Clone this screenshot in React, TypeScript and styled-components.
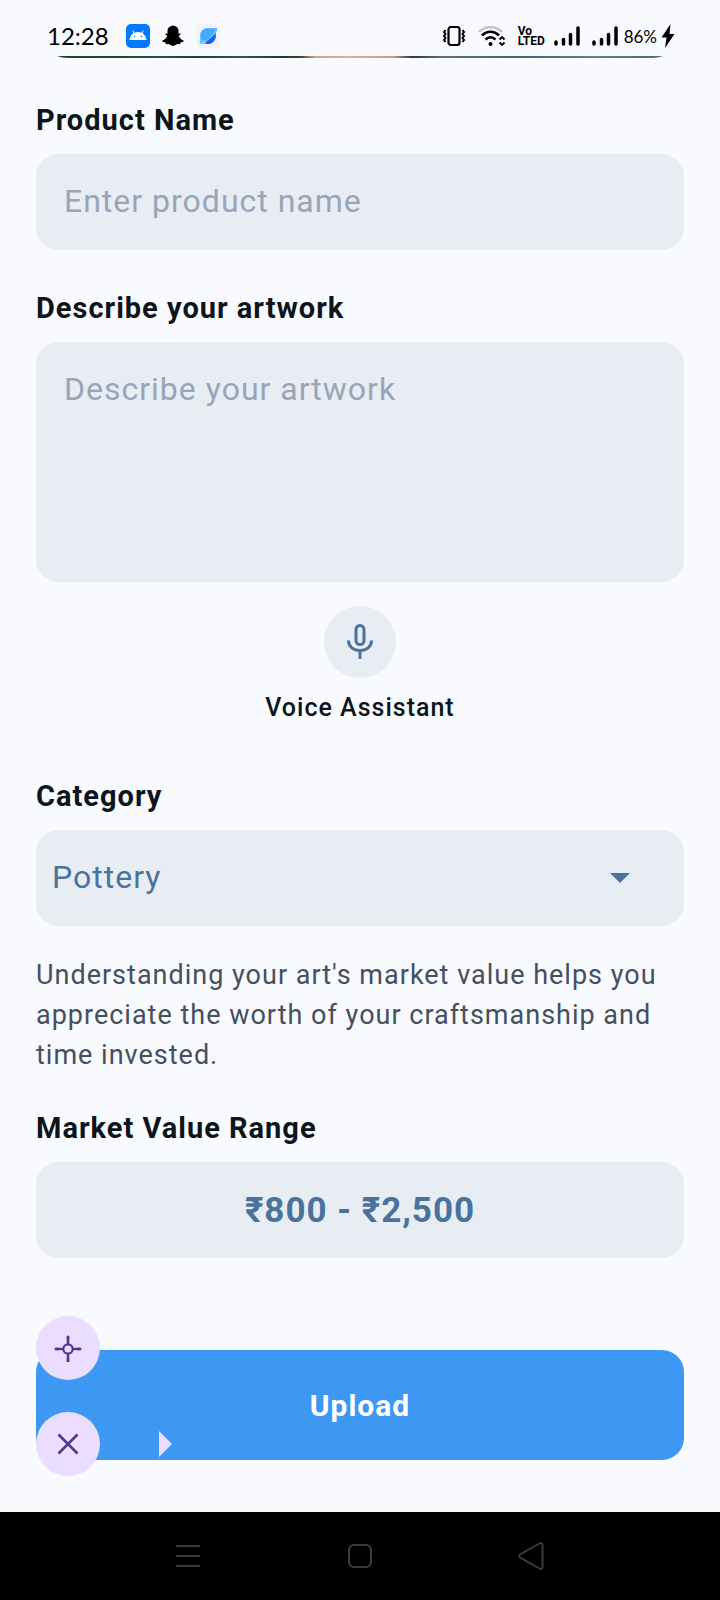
import React from "react";
import styled, { createGlobalStyle } from "styled-components";

const color = {
  page: "#f8fafe",
  field: "#e8edf4",
  ink: "#0d151c",
  body: "#454f5e",
  accent: "#49739c",
  hint: "#9aa4b8",
  primary: "#3d98f4",
  fab: "#eaddff",
  fabInk: "#4f378b",
};

const GlobalStyle = createGlobalStyle`
  *, *::before, *::after { box-sizing: border-box; }
  body {
    margin: 0;
    background: ${color.page};
    color: ${color.ink};
    font-family: Roboto, "Liberation Sans", sans-serif;
    letter-spacing: 1px;
  }
  button, input, textarea, select {
    font: inherit;
    letter-spacing: inherit;
    border: 0;
    margin: 0;
  }
  svg { display: block; }
`;

const Screen = styled.div`
  min-height: 100vh;
  display: flex;
  flex-direction: column;
`;

const StatusBar = styled.header`
  height: 56px;
  padding: 16px 45px 0 47px;
  display: flex;
  justify-content: space-between;
  align-items: center;
  color: #000;
  font-family: Lato, "Open Sans", sans-serif;
  letter-spacing: normal;
`;

const StatusGroup = styled.div<{ $gap: number }>`
  display: flex;
  align-items: center;
  gap: ${(p) => p.$gap}px;
`;

const Clock = styled.time`
  font-size: 24px;
  line-height: 36px;
  margin-right: 5px;
`;

const Battery = styled.div`
  display: flex;
  align-items: center;
  gap: 4px;
  font-size: 17px;
  margin-left: -6px;
`;

const Volte = styled.span`
  font-family: "Liberation Sans Narrow", Roboto, sans-serif;
  font-size: 12px;
  font-weight: 700;
  line-height: 10px;
  width: 24px;
`;

const PhotoEdge = styled.div`
  height: 2px;
  margin: 0 36px;
  overflow: hidden;
  display: flex;
  align-items: flex-end;
`;

const Photo = styled.div`
  flex: 1;
  height: 64px;
  border-radius: 32px;
  background: linear-gradient(
    90deg,
    #17402a 0%, #1d4a30 12%, #2c5240 20%, #1e4030 24%, #38534f 32%, #1c3a2c 38%,
    #3b4a34 41%, #c9a48e 43%, #dcae98 48%, #c79f90 55%, #2b3a4a 58%, #60727e 63%,
    #3b6773 75%, #5d818f 86%, #3f6674 100%
  );
`;

const Form = styled.form`
  flex: 1;
  display: flex;
  flex-direction: column;
  padding: 44px 36px 52px;
`;

const Group = styled.div<{ $before?: number }>`
  display: flex;
  flex-direction: column;
  gap: 16px;
  margin-top: ${(p) => p.$before ?? 0}px;
`;

const Label = styled.label`
  font-size: 29px;
  line-height: 36px;
  font-weight: 700;
`;

const Input = styled.input`
  height: 96px;
  width: 100%;
  padding: 0 28px 2px;
  border-radius: 22px;
  background: ${color.field};
  font-size: 32px;
  &::placeholder { color: ${color.hint}; opacity: 1; }
`;

const TextArea = styled.textarea`
  height: 240px;
  width: 100%;
  padding: 28px;
  border-radius: 22px;
  background: ${color.field};
  font-size: 32px;
  line-height: 38px;
  resize: none;
  &::placeholder { color: ${color.hint}; opacity: 1; }
`;

const Voice = styled.div`
  display: flex;
  flex-direction: column;
  align-items: center;
  gap: 14px;
  margin-top: 24px;
`;

const MicButton = styled.button`
  width: 72px;
  height: 72px;
  padding: 0;
  border-radius: 50%;
  display: grid;
  place-items: center;
  background: ${color.field};
  color: ${color.accent};
`;

const VoiceCaption = styled.span`
  font-size: 25px;
  line-height: 32px;
  font-weight: 500;
`;

const SelectBox = styled.div`
  display: grid;
  align-items: center;
  > * { grid-area: 1 / 1; }
  > svg {
    justify-self: end;
    margin-right: 54px;
    pointer-events: none;
  }
`;

const Select = styled.select`
  appearance: none;
  height: 96px;
  width: 100%;
  padding: 0 16px 2px;
  border-radius: 22px;
  background: ${color.field};
  color: ${color.accent};
  font-size: 32px;
`;

const Note = styled.p`
  margin: 29px 0 0;
  color: ${color.body};
  font-size: 27px;
  line-height: 40px;
`;

const Price = styled.output`
  height: 96px;
  display: flex;
  align-items: center;
  justify-content: center;
  border-radius: 22px;
  background: ${color.field};
  color: ${color.accent};
  font-size: 35px;
  font-weight: 700;
`;

const Actions = styled.div`
  position: relative;
  margin-top: 92px;
`;

const UploadButton = styled.button`
  width: 100%;
  height: 110px;
  border-radius: 22px;
  background: ${color.primary};
  color: #fff;
  font-size: 30px;
  font-weight: 700;
`;

const FloatingButton = styled.button<{ $top: number }>`
  position: absolute;
  left: 0;
  top: ${(p) => p.$top}px;
  width: 64px;
  height: 64px;
  padding: 0;
  border-radius: 50%;
  display: grid;
  place-items: center;
  background: ${color.fab};
  color: ${color.fabInk};
`;

const Pointer = styled.svg`
  position: absolute;
  left: 122px;
  top: 81px;
`;

const NavBar = styled.nav`
  height: 88px;
  background: #000;
  display: grid;
  grid-template-columns: repeat(3, 172px);
  justify-content: center;
`;

const NavButton = styled.button`
  padding: 0;
  display: grid;
  place-items: center;
  background: none;
  color: #3c3c3c;
`;

const AndroidIcon = () => (
  <svg width="24" height="24" viewBox="0 0 24 24" aria-hidden="true">
    <rect width="24" height="24" rx="5" fill="#007bff" />
    <path d="M4 16c.3-3 1.800-5.300 4-6.600L6.800 6.600M20 16c-.3-3-1.800-5.300-4-6.600l1.200-2.800" fill="none" stroke="#fff" strokeWidth="1" />
    <path d="M4 16c.4-4.600 3.700-8 8-8s7.600 3.400 8 8z" fill="#fff" />
    <circle cx="8.500" cy="12.500" r=".8" fill="#007bff" />
    <circle cx="15.500" cy="12.500" r=".8" fill="#007bff" />
  </svg>
);

const GhostIcon = () => (
  <svg width="22" height="22" viewBox="0 0 22 22" aria-hidden="true">
    <path d="M11 .7c3.400 0 5.500 2.300 5.500 5.500v2.600l1.900-.4.500.9-2.200 1.500c.7 2.200 2.200 3.800 4.900 4.800l-.2 1.200-2.800.7-.6 1.700-2.900-.2c-1.300.9-2.500 1.800-4.100 1.800s-2.800-.9-4.100-1.800l-2.900.2-.6-1.700-2.800-.7-.2-1.200c2.700-1 4.200-2.600 4.900-4.800L3.100 9.300l.5-.9 1.900.4V6.200C5.500 3 7.600.7 11 .7z" />
  </svg>
);

const PlanetIcon = () => (
  <svg width="24" height="24" viewBox="0 0 24 24" aria-hidden="true">
    <rect width="24" height="24" rx="5" fill="#f1f3f6" />
    <circle cx="12" cy="12" r="8" fill="#45aaff" />
    <path d="M19.500 9c1.200 6-2.500 11-8 11-2 0-3.500-.6-4.800-1.800C12 17 16.500 13.500 19.500 9z" fill="#1f5cf0" />
    <path d="M13 4.600 21 4c.4 1.800-.7 4.500-2.500 7L16 8z" fill="#45aaff" />
    <path d="M4 14.500 3.500 20c2.500.3 5-.3 7.500-2z" fill="#64c4ff" />
    <path d="M4 20C10 18.500 17 12 20.500 5" fill="none" stroke="#9bdcff" strokeWidth=".8" />
  </svg>
);

const VibrateIcon = () => (
  <svg width="24" height="20" viewBox="0 0 24 20" fill="none" stroke="#000" aria-hidden="true">
    <rect x="6.500" y="1" width="11" height="18" rx="2.500" strokeWidth="2.200" />
    <path d="m3.500 4-1.500 2 1.500 2L2 10l1.500 2L2 14l1.500 2M20.500 4 22 6l-1.500 2 1.500 2-1.500 2 1.500 2-1.500 2" strokeWidth="2" />
  </svg>
);

const WifiIcon = () => (
  <svg width="28" height="20" viewBox="0 0 28 20" fill="none" aria-hidden="true">
    <path d="M1 6C7-.5 18-.5 24 6" stroke="#c3c5c8" strokeWidth="2.500" />
    <path d="M4 9.500c5-5 12-5 17 0" stroke="#000" strokeWidth="2.500" />
    <path d="M7.500 13.500c3-3 7-3 10 0" stroke="#000" strokeWidth="2.500" />
    <circle cx="12.500" cy="18" r="2" fill="#000" />
    <path d="m21.500 13.500 2.500-2.500 2.500 2.500M21.500 16.500 24 19l2.500-2.500" stroke="#000" strokeWidth="1.800" />
  </svg>
);

const SignalIcon = () => (
  <svg width="26" height="20" viewBox="0 0 26 20" stroke="#000" strokeWidth="3.500" strokeLinecap="round" aria-hidden="true">
    <path d="M2 16v2M9.500 13.500v4.500M16.500 8.500v9.500M24 2v16" />
  </svg>
);

const BoltIcon = () => (
  <svg width="14" height="24" viewBox="0 0 14 24" aria-hidden="true">
    <path d="M9.500 0 .5 13.500h5L4 24l9.500-14h-5z" />
  </svg>
);

const MicIcon = () => (
  <svg width="30" height="36" viewBox="0 0 30 36" fill="none" stroke="currentColor" strokeWidth="3" aria-hidden="true">
    <rect x="11" y="1.500" width="8" height="19" rx="4" strokeWidth="3" />
    <path d="M3.500 16.500c0 6.500 5.200 10 11.500 10s11.500-3.500 11.500-10M15 26.500V35" />
  </svg>
);

const CaretIcon = () => (
  <svg width="20" height="10" viewBox="0 0 20 10" fill={color.accent} aria-hidden="true">
    <path d="M0 0h20L10 10z" />
  </svg>
);

const TargetIcon = () => (
  <svg width="28" height="28" viewBox="0 0 28 28" fill="currentColor" aria-hidden="true">
    <circle cx="14" cy="15" r="4.700" fill="none" stroke="currentColor" strokeWidth="2.200" />
    <path d="M12.500 3a1.500 1.500 0 0 1 3 0l-.4 7h-2.200zM12.500 27a1.500 1.500 0 0 0 3 0l-.4-7h-2.200zM2 13.500a1.500 1.500 0 0 0 0 3l7-.4v-2.200zM26 13.500a1.500 1.500 0 0 1 0 3l-7-.4v-2.200z" />
  </svg>
);

const CloseIcon = () => (
  <svg width="22" height="22" viewBox="0 0 22 22" stroke="currentColor" strokeWidth="2.500" aria-hidden="true">
    <path d="m1.500 1.500 19 19m0-19-19 19" />
  </svg>
);

const categories = ["Pottery", "Painting", "Textiles", "Woodwork"];

export default function App() {
  return (
    <Screen>
      <GlobalStyle />
      <StatusBar>
        <StatusGroup $gap={12}>
          <Clock>12:28</Clock>
          <AndroidIcon />
          <GhostIcon />
          <PlanetIcon />
        </StatusGroup>
        <StatusGroup $gap={12}>
          <VibrateIcon />
          <WifiIcon />
          <Volte>Vo LTED</Volte>
          <SignalIcon />
          <SignalIcon />
          <Battery>
            86%
            <BoltIcon />
          </Battery>
        </StatusGroup>
      </StatusBar>
      <PhotoEdge>
        <Photo />
      </PhotoEdge>

      <Form onSubmit={(e) => e.preventDefault()}>
        <Group>
          <Label htmlFor="name">Product Name</Label>
          <Input id="name" type="text" placeholder="Enter product name" />
        </Group>
        <Group $before={40}>
          <Label htmlFor="description">Describe your artwork</Label>
          <TextArea id="description" placeholder="Describe your artwork" />
        </Group>
        <Voice>
          <MicButton type="button" aria-labelledby="voice-caption">
            <MicIcon />
          </MicButton>
          <VoiceCaption id="voice-caption">Voice Assistant</VoiceCaption>
        </Voice>
        <Group $before={54}>
          <Label htmlFor="category">Category</Label>
          <SelectBox>
            <Select id="category" defaultValue="Pottery">
              {categories.map((name) => (
                <option key={name}>{name}</option>
              ))}
            </Select>
            <CaretIcon />
          </SelectBox>
        </Group>
        <Note>
          Understanding your art's market value helps you appreciate the worth
          of your craftsmanship and time invested.
        </Note>
        <Group $before={35}>
          <Label htmlFor="range">Market Value Range</Label>
          <Price id="range">₹800 - ₹2,500</Price>
        </Group>
        <Actions>
          <UploadButton type="submit">Upload</UploadButton>
          <FloatingButton type="button" $top={-34} aria-label="Move">
            <TargetIcon />
          </FloatingButton>
          <FloatingButton type="button" $top={62} aria-label="Close">
            <CloseIcon />
          </FloatingButton>
          <Pointer width="14" height="26" viewBox="0 0 14 26" fill={color.fab} aria-hidden="true">
            <path d="M1 0v26l13-13z" />
          </Pointer>
        </Actions>
      </Form>

      <NavBar>
        <NavButton type="button" aria-label="Recent apps">
          <svg width="24" height="24" viewBox="0 0 24 24" stroke="currentColor" strokeWidth="2">
            <path d="M0 2h24M0 12h24M0 22h24" />
          </svg>
        </NavButton>
        <NavButton type="button" aria-label="Home">
          <svg width="24" height="24" viewBox="0 0 24 24" fill="none" stroke="currentColor" strokeWidth="2">
            <rect x="1" y="1" width="22" height="22" rx="5" />
          </svg>
        </NavButton>
        <NavButton type="button" aria-label="Back">
          <svg width="28" height="28" viewBox="0 0 28 28" fill="none" stroke="currentColor" strokeWidth="2">
            <path d="M21.500 1.500 2 12.500a2 2 0 0 0 0 3l19.500 11c1.300.8 3 .3 3-1.500V3c0-1.800-1.700-2.300-3-1.500z" />
          </svg>
        </NavButton>
      </NavBar>
    </Screen>
  );
}
